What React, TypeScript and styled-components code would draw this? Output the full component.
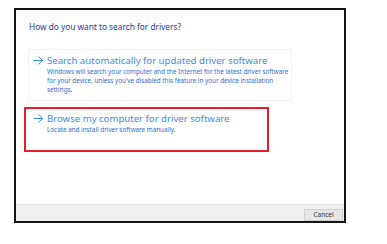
import styled, { createGlobalStyle } from "styled-components";

const Global = createGlobalStyle`
  html, body { margin: 0; padding: 0; background: #ffffff; }
  body { font-family: "Noto Sans", "Open Sans", sans-serif; }
`;

const Frame = styled.div`
  margin: 8px 0 0 14px;
  width: 328px;
  height: 211px;
  border: 2px solid #151515;
  background: #ffffff;
  display: flex;
  flex-direction: column;
`;

const Content = styled.div`
  flex: 1;
  padding: 11px 0 0 12px;
  display: flex;
  flex-direction: column;
`;

const Heading = styled.div`
  font-size: 8.3px;
  line-height: 12px;
  color: #1f3f8f;
  padding-left: 1px;
  margin-bottom: 16px;
`;

const Option = styled.div<{ $marked?: boolean }>`
  width: ${(p) => (p.$marked ? "234px" : "258px")};
  margin-left: ${(p) => (p.$marked ? "-4px" : "0")};
  border: ${(p) => (p.$marked ? "2px solid #e61e2b" : "1px solid #f1f1f1")};
  padding: ${(p) => (p.$marked ? "3px 0 16px 7px" : "4px 0 6px 4px")};
  margin-bottom: 6px;
  display: flex;
  gap: 4px;
`;

const Arrow = styled.svg`
  flex: none;
  width: 10px;
  height: 13px;
`;

const Texts = styled.div`
  display: flex;
  flex-direction: column;
`;

const Title = styled.div`
  font-size: 9.6px;
  line-height: 13px;
  color: #3d8ce8;
  white-space: nowrap;
`;

const Desc = styled.div`
  font-size: 6.3px;
  line-height: 9px;
  color: #2a6fd6;
  width: 245px;
`;

const Footer = styled.div`
  height: 16px;
  border-top: 1px solid #e3e3e3;
  background: #f0f0f0;
  display: flex;
  justify-content: flex-end;
  align-items: flex-end;
  padding-right: 1px;
`;

const CancelButton = styled.button`
  width: 39px;
  height: 12px;
  padding: 0;
  border: 1px solid #cfcfcf;
  background: #e6e6e6;
  font-family: "Noto Sans", "Open Sans", sans-serif;
  font-size: 6.5px;
  line-height: 10px;
  color: #333333;
`;

const ArrowIcon = () => (
  <Arrow viewBox="0 0 10 13">
    <path d="M0.5 6.5 H9.5 M5.5 2.5 L9.5 6.5 L5.5 10.5" fill="none" stroke="#3d8ce8" strokeWidth="1" />
  </Arrow>
);

export default function App() {
  return (
    <>
      <Global />
      <Frame>
        <Content>
          <Heading>How do you want to search for drivers?</Heading>
          <Option>
            <ArrowIcon />
            <Texts>
              <Title>Search automatically for updated driver software</Title>
              <Desc>
                Windows will search your computer and the Internet for the latest driver software
                for your device, unless you've disabled this feature in your device installation
                settings.
              </Desc>
            </Texts>
          </Option>
          <Option $marked>
            <ArrowIcon />
            <Texts>
              <Title>Browse my computer for driver software</Title>
              <Desc>Locate and install driver software manually.</Desc>
            </Texts>
          </Option>
        </Content>
        <Footer>
          <CancelButton>Cancel</CancelButton>
        </Footer>
      </Frame>
    </>
  );
}
